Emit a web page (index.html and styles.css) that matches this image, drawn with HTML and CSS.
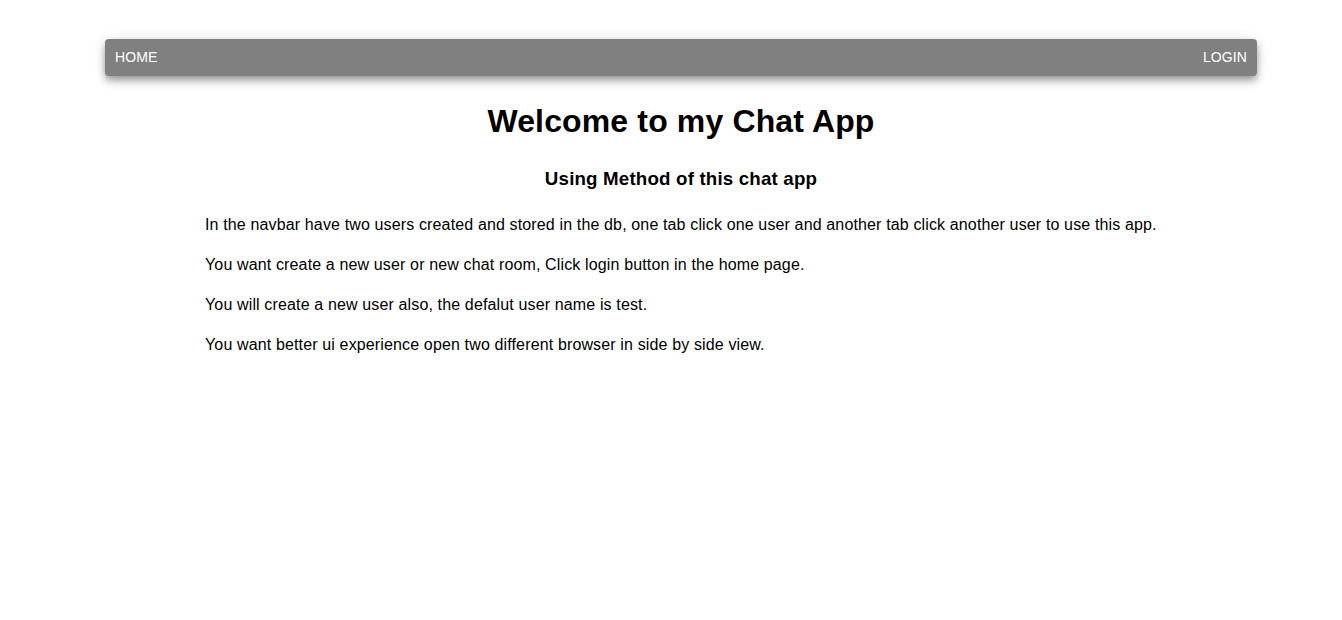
FILE: index.html
```html
<!DOCTYPE html>
<html>
<head>
<meta charset="utf-8">
<link rel="stylesheet" href="styles.css">
</head>
<body>
<div class="page">
  <nav class="navbar">
    <a class="nav-link">HOME</a>
    <a class="nav-link">LOGIN</a>
  </nav>
  <main class="content">
    <h1 class="title">Welcome to my Chat App</h1>
    <h3 class="subtitle">Using Method of this chat app</h3>
    <div class="text">
      <p>In the navbar have two users created and stored in the db, one tab click one user and another tab click another user to use this app.</p>
      <p>You want create a new user or new chat room, Click login button in the home page.</p>
      <p>You will create a new user also, the defalut user name is test.</p>
      <p>You want better ui experience open two different browser in side by side view.</p>
    </div>
  </main>
</div>
</body>
</html>
```
FILE: styles.css
```css
html, body {
  margin: 0;
  padding: 0;
  background: #fff;
  font-family: "Liberation Sans", Arial, sans-serif;
  color: #000;
}
.page {
  width: 1152px;
  margin-left: 105px;
  padding-top: 39px;
}
.navbar {
  height: 37px;
  box-sizing: border-box;
  background: #808080;
  border-radius: 4px;
  box-shadow: 0 4px 6px -1px rgba(0,0,0,0.25), 0 6px 10px 0 rgba(0,0,0,0.16), 0 1px 14px 0 rgba(0,0,0,0.12);
  display: flex;
  justify-content: space-between;
  align-items: center;
  padding: 0 10px 2px;
}
.nav-link {
  color: #fff;
  font-size: 14px;
  text-decoration: none;
  letter-spacing: 0.1px;
}
.content {
  padding: 0 100px;
}
.title {
  text-align: center;
  font-size: 32px;
  margin: 27px 0 0;
  line-height: 37px;
  letter-spacing: 0.14px;
}
.subtitle {
  text-align: center;
  font-size: 18.72px;
  margin: 28px 0 0;
  line-height: 22px;
  letter-spacing: 0.18px;
}
.text {
  margin-top: 23px;
}
.text p {
  font-size: 16px;
  line-height: 24px;
  margin: 0 0 16px;
  letter-spacing: 0.14px;
}
```
